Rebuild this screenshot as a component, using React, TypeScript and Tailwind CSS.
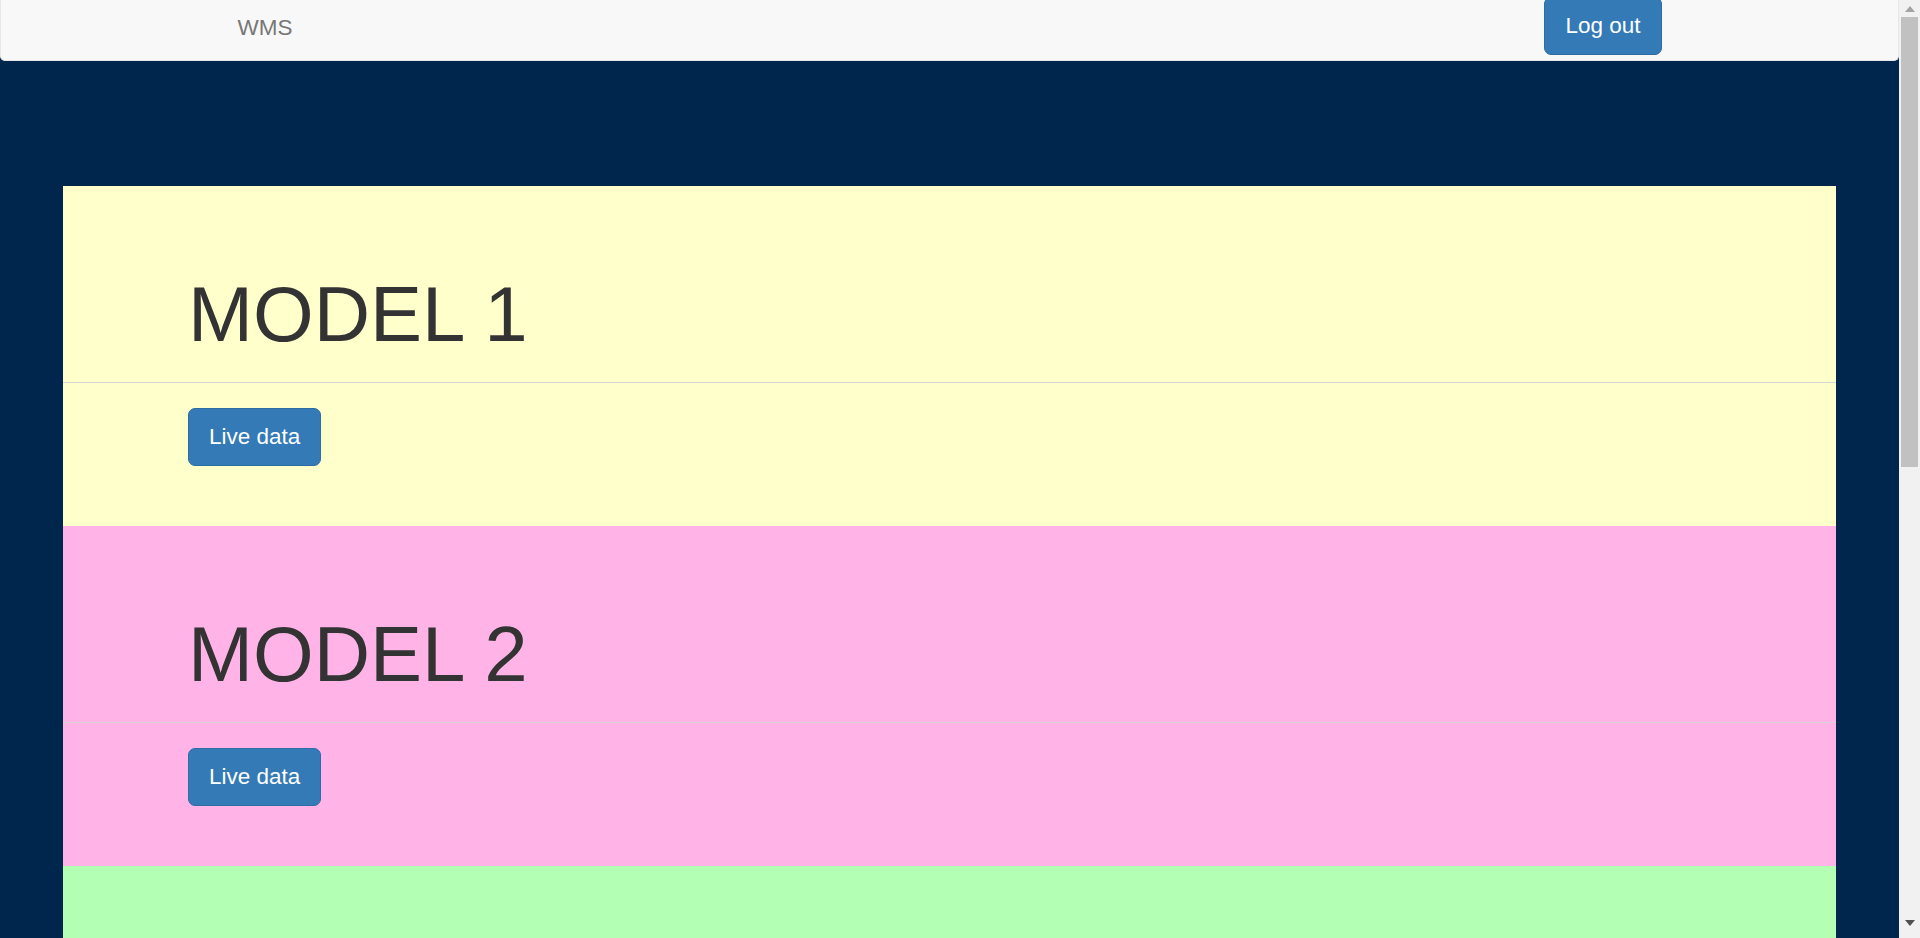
import React from 'react';

const models = [
  { name: 'MODEL 1', bg: 'bg-[#ffffcc]' },
  { name: 'MODEL 2', bg: 'bg-[#ffb3e6]' },
];

const ModelPanel: React.FC<{ name: string; bg: string }> = ({ name, bg }) => (
  <section className={`h-[340px] shrink-0 ${bg}`}>
    <div className="pt-[85px] pl-[125px]">
      <h1 className="text-[78px] leading-[86px] text-[#333333] font-normal">{name}</h1>
    </div>
    <div className="mt-[25px] border-t border-[#d6d6d6]" />
    <div className="pt-[25px] pl-[125px]">
      <button className="h-[58px] px-[20px] rounded-[7px] border border-[#2e6da4] bg-[#337ab7] text-white text-[22.5px] leading-[30px]">
        Live data
      </button>
    </div>
  </section>
);

const Scrollbar: React.FC = () => (
  <div className="w-[21px] h-full bg-[#f1f1f1] flex flex-col items-center shrink-0">
    <div className="h-[17px] w-full flex items-center justify-center">
      <svg width="10" height="6" viewBox="0 0 10 6">
        <polygon points="0,6 10,6 5,0" fill="#a3a3a3" />
      </svg>
    </div>
    <div className="w-[17px] h-[450px] bg-[#c1c1c1]" />
    <div className="flex-1" />
    <div className="h-[22px] w-full flex items-start justify-center pt-[4px]">
      <svg width="10" height="6" viewBox="0 0 10 6">
        <polygon points="0,0 10,0 5,6" fill="#505050" />
      </svg>
    </div>
  </div>
);

export default function App() {
  return (
    <div
      className="h-screen w-full overflow-hidden flex bg-[#00264d]"
      style={{ fontFamily: '"Liberation Sans", Arial, Helvetica, sans-serif' }}
    >
      <div className="flex-1 flex flex-col overflow-hidden">
        <nav className="h-[61px] shrink-0 bg-[#f8f8f8] border border-t-0 border-[#e7e7e7] rounded-b-[5px]">
          <div className="w-[1462px] mx-auto px-[19px] flex justify-between items-start">
            <a className="mt-[15px] text-[22.5px] leading-[25px] text-[#777777]">WMS</a>
            <button className="-mt-[3px] h-[58px] px-[20px] rounded-[7px] border border-[#2e6da4] bg-[#337ab7] text-white text-[22.5px] leading-[30px]">
              Log out
            </button>
          </div>
        </nav>
        <main className="mt-[125px] mx-[63px] flex flex-col">
          {models.map((m) => (
            <ModelPanel key={m.name} name={m.name} bg={m.bg} />
          ))}
          {/* third model panel, only its top edge is in view */}
          <section className="h-[340px] shrink-0 bg-[#b3ffb3]" />
        </main>
      </div>
      <Scrollbar />
    </div>
  );
}
